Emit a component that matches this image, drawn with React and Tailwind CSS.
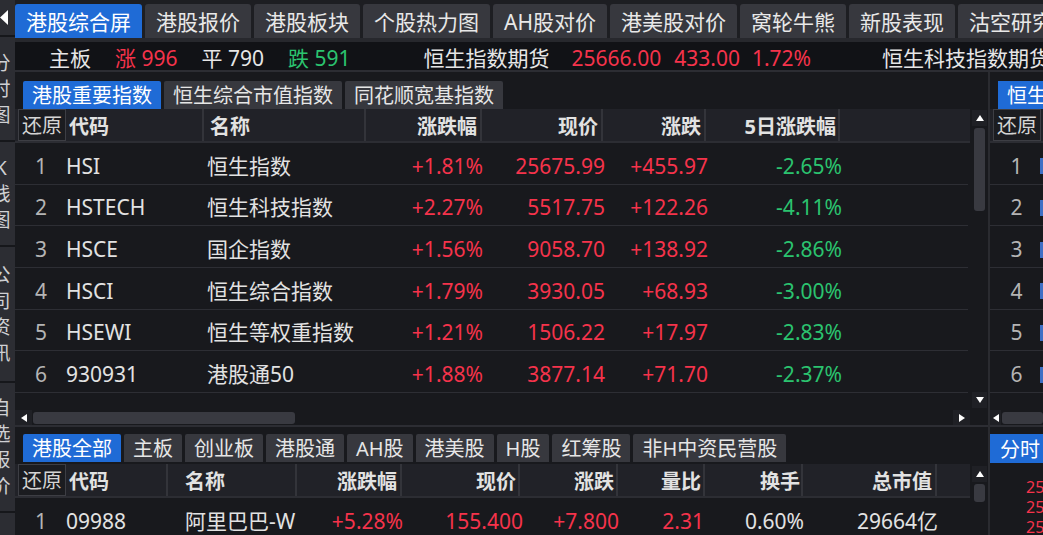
import React from "react";

// ---------------------------------------------------------------------------
// Data
// ---------------------------------------------------------------------------
const topTabs = ["港股综合屏", "港股报价", "港股板块", "个股热力图", "AH股对价", "港美股对价", "窝轮牛熊", "新股表现", "沽空研究"];
const indexTabs = ["港股重要指数", "恒生综合市值指数", "同花顺宽基指数"];
const boardTabs = ["港股全部", "主板", "创业板", "港股通", "AH股", "港美股", "H股", "红筹股", "非H中资民营股"];

const indexRows = [
    ["1", "HSI", "恒生指数", "+1.81%", "25675.99", "+455.97", "-2.65%"],
    ["2", "HSTECH", "恒生科技指数", "+2.27%", "5517.75", "+122.26", "-4.11%"],
    ["3", "HSCE", "国企指数", "+1.56%", "9058.70", "+138.92", "-2.86%"],
    ["4", "HSCI", "恒生综合指数", "+1.79%", "3930.05", "+68.93", "-3.00%"],
    ["5", "HSEWI", "恒生等权重指数", "+1.21%", "1506.22", "+17.97", "-2.83%"],
    ["6", "930931", "港股通50", "+1.88%", "3877.14", "+71.70", "-2.37%"],
];

// ---------------------------------------------------------------------------
// Small drawings
// ---------------------------------------------------------------------------
const Tri = ({ dir }) => {
    const pts = {
        up: "0,6 4,0 8,6",
        down: "0,0 8,0 4,6",
        left: "6,0 6,8 0,4",
        right: "0,0 0,8 6,4",
    }[dir];
    const vb = dir === "up" || dir === "down" ? "0 0 8 6" : "0 0 6 8";
    const cls = dir === "up" || dir === "down" ? "w-[8px] h-[6px]" : "w-[6px] h-[8px]";
    return (
        <svg viewBox={vb} className={cls}>
            <polygon points={pts} fill="#ffffff" />
        </svg>
    );
};

const VText = ({ chars }) => (
    <div className="flex flex-col -ml-[9px] w-[20px]">
        {chars.split("").map((c, i) => (
            <span key={i} className="text-center text-[19px] leading-[26px] text-[#cfd0d3]">{c}</span>
        ))}
    </div>
);

// ---------------------------------------------------------------------------
// Sidebar
// ---------------------------------------------------------------------------
const Sidebar = () => (
    <div className="w-[15px] shrink-0 h-full bg-[#2c2d33] flex flex-col overflow-hidden">
        <div className="h-[35px] shrink-0 flex items-center">
            <svg viewBox="0 0 8 15" className="w-[8px] h-[15px]">
                <polygon points="8,0 8,15 0,7.5" fill="#ffffff" />
            </svg>
        </div>
        <div className="h-[2px] shrink-0 bg-[#16171b]" />
        <div className="h-[103px] shrink-0 flex items-center"><VText chars="分时图" /></div>
        <div className="h-[2px] shrink-0 bg-[#16171b]" />
        <div className="h-[103px] shrink-0 flex items-center"><VText chars="K线图" /></div>
        <div className="h-[2px] shrink-0 bg-[#16171b]" />
        <div className="h-[134px] shrink-0 flex items-center"><VText chars="公司资讯" /></div>
        <div className="h-[2px] shrink-0 bg-[#16171b]" />
        <div className="h-[128px] shrink-0 flex items-center"><VText chars="自选报价" /></div>
        <div className="h-[2px] shrink-0 bg-[#16171b]" />
        <div className="flex-1" />
    </div>
);

// ---------------------------------------------------------------------------
// Tabs
// ---------------------------------------------------------------------------
const SubTabs = ({ items }) => (
    <div className="flex gap-[3px] h-[28px]">
        {items.map((t, i) => (
            <div
                key={t}
                className={`px-[9px] pt-[2px] flex items-center text-[20px] whitespace-nowrap rounded-t-[2px] ${i === 0 ? "bg-[#1f6bd6] text-white" : "bg-[#37383e] text-[#e6e6e6]"}`}
            >
                {t}
            </div>
        ))}
    </div>
);

const RestoreBox = () => (
    <div className="w-[48px] h-[32px] shrink-0 self-end border border-[#3d3e44] bg-[#1b1c20] flex items-center justify-center pt-[2px] text-[20px] font-normal text-[#d4d4d4]">
        还原
    </div>
);

// ---------------------------------------------------------------------------
// Upper table
// ---------------------------------------------------------------------------
const IndexTable = () => (
    <div className="flex h-[316px] shrink-0">
        <div className="w-[955px] flex flex-col">
            <div className="h-[301px] shrink-0 flex flex-col">
                {/* header */}
                <div className="h-[34px] shrink-0 pl-[3px] flex bg-[#212228] border-b-2 border-[#2c2d33] text-[20px] font-bold text-[#e2e2e2]">
                    <RestoreBox />
                    <div className="w-[138px] pl-[3px] pt-[3px] flex items-center border-r-2 border-[#33343a]">代码</div>
                    <div className="w-[162px] pl-[6px] pt-[3px] flex items-center border-r-2 border-[#33343a]">名称</div>
                    <div className="w-[116px] pr-[3px] pt-[3px] flex items-center justify-end border-r-2 border-[#33343a]">涨跌幅</div>
                    <div className="w-[121px] pr-[3px] pt-[3px] flex items-center justify-end border-r-2 border-[#33343a]">现价</div>
                    <div className="w-[103px] pr-[3px] pt-[3px] flex items-center justify-end border-r-2 border-[#33343a]">涨跌</div>
                    <div className="w-[134px] pr-[2px] pt-[3px] flex items-center justify-end border-r-2 border-[#33343a]">5日涨跌幅</div>
                    <div className="flex-1" />
                </div>
                {/* rows */}
                {indexRows.map((r) => (
                    <div key={r[0]} className="h-[41.67px] shrink-0 pl-[3px] pt-[6px] flex items-center border-b border-[#2d2e34] text-[21px] mr-[2px]">
                        <div className="w-[46px] text-center text-[#b4b4b4]">{r[0]}</div>
                        <div className="w-[143px] pl-[2px] text-[#e2e2e2]">{r[1]}</div>
                        <div className="w-[159px] text-[#e2e2e2] whitespace-nowrap">{r[2]}</div>
                        <div className="w-[117px] text-right text-[#f5334b]">{r[3]}</div>
                        <div className="w-[122px] text-right text-[#f5334b]">{r[4]}</div>
                        <div className="w-[103px] text-right text-[#f5334b]">{r[5]}</div>
                        <div className="w-[134px] text-right text-[#2bc36f]">{r[6]}</div>
                    </div>
                ))}
            </div>
            <div className="flex items-center h-[15px] shrink-0">
                <div className="w-[17px] h-[15px] bg-[#1f2025] flex items-center justify-center"><Tri dir="left" /></div>
                <div className="ml-[1px] w-[262px] h-[12px] rounded-[3px] bg-[#393a41]" />
                <div className="flex-1" />
                <div className="w-[17px] h-[16px] bg-[#1f2025] flex items-center justify-center"><Tri dir="right" /></div>
            </div>
        </div>
        {/* vertical scroll */}
        <div className="w-[18px] flex flex-col pl-[2px] pt-[1px]">
            <div className="w-[15px] h-[16px] shrink-0 bg-[#1f2025] flex items-center justify-center"><Tri dir="up" /></div>
            <div className="ml-[2px] mt-[2px] w-[11px] h-[83px] shrink-0 rounded-[3px] bg-[#393a41]" />
            <div className="flex-1" />
            <div className="w-[15px] h-[16px] shrink-0 bg-[#1f2025] flex items-center justify-center"><Tri dir="down" /></div>
            <div className="h-[17px] shrink-0" />
        </div>
    </div>
);

// ---------------------------------------------------------------------------
// Lower table
// ---------------------------------------------------------------------------
const BoardTable = () => (
    <div className="flex flex-1 min-h-0 overflow-hidden">
        <div className="w-[955px] flex flex-col">
            <div className="h-[34px] shrink-0 pl-[3px] flex bg-[#212228] border-b-2 border-[#2c2d33] text-[20px] font-bold text-[#e2e2e2]">
                <RestoreBox />
                <div className="w-[102px] pl-[3px] pt-[3px] flex items-center border-r-2 border-[#33343a]">代码</div>
                <div className="w-[129px] pl-[17px] pt-[3px] flex items-center border-r-2 border-[#33343a]">名称</div>
                <div className="w-[105px] pr-[3px] pt-[3px] flex items-center justify-end border-r-2 border-[#33343a]">涨跌幅</div>
                <div className="w-[118px] pr-[2px] pt-[3px] flex items-center justify-end border-r-2 border-[#33343a]">现价</div>
                <div className="w-[98px] pr-[2px] pt-[3px] flex items-center justify-end border-r-2 border-[#33343a]">涨跌</div>
                <div className="w-[87px] pr-[2px] pt-[3px] flex items-center justify-end border-r-2 border-[#33343a]">量比</div>
                <div className="w-[98px] pr-[1px] pt-[3px] flex items-center justify-end border-r-2 border-[#33343a]">换手</div>
                <div className="w-[134px] pr-[3px] pt-[3px] flex items-center justify-end border-r-2 border-[#33343a]">总市值</div>
                <div className="flex-1" />
            </div>
            <div className="h-[42px] shrink-0 pl-[3px] pt-[5px] flex items-center text-[21px]">
                <div className="w-[46px] text-center text-[#b4b4b4]">1</div>
                <div className="w-[121px] pl-[2px] text-[#e2e2e2]">09988</div>
                <div className="w-[112px] text-[#e2e2e2] whitespace-nowrap">阿里巴巴-W</div>
                <div className="w-[106px] text-right text-[#f5334b]">+5.28%</div>
                <div className="w-[120px] text-right text-[#f5334b]">155.400</div>
                <div className="w-[96px] text-right text-[#f5334b]">+7.800</div>
                <div className="w-[85px] text-right text-[#f5334b]">2.31</div>
                <div className="w-[100px] text-right text-[#e2e2e2]">0.60%</div>
                <div className="w-[134px] text-right text-[#e2e2e2]">29664亿</div>
            </div>
        </div>
        <div className="w-[18px] flex flex-col pl-[2px] pt-[2px]">
            <div className="w-[15px] h-[16px] shrink-0 bg-[#1f2025] flex items-center justify-center"><Tri dir="up" /></div>
            <div className="ml-[2px] mt-[2px] w-[11px] h-[18px] shrink-0 rounded-[3px] bg-[#393a41]" />
        </div>
    </div>
);

// ---------------------------------------------------------------------------
// Right (clipped) panel
// ---------------------------------------------------------------------------
const RightPanel = () => (
    <div className="flex-1 flex flex-col overflow-hidden">
        <div className="h-[353px] shrink-0 flex flex-col">
            <div className="pt-[9px] pl-[8px] h-[37px] shrink-0">
                <div className="h-[28px] w-[80px] px-[9px] pt-[2px] bg-[#1f6bd6] text-white text-[20px] flex items-center whitespace-nowrap">恒生指数</div>
            </div>
            <div className="h-[34px] shrink-0 pl-[3px] flex bg-[#212228] border-b-2 border-[#2c2d33]">
                <RestoreBox />
            </div>
            {["1", "2", "3", "4", "5", "6"].map((n) => (
                <div key={n} className="h-[41.67px] shrink-0 pl-[3px] pt-[6px] flex items-center border-b border-[#2d2e34] text-[21px]">
                    <div className="w-[48px] text-center text-[#b4b4b4]">{n}</div>
                    <div className="w-[3px] h-[16px] bg-[#3f6fc4]" />
                </div>
            ))}
            <div className="flex-1" />
            <div className="h-[15px] shrink-0 flex items-center">
                <div className="w-[17px] h-[15px] bg-[#1f2025] flex items-center justify-center"><Tri dir="left" /></div>
                <div className="ml-[1px] w-[60px] h-[12px] rounded-[3px] bg-[#393a41]" />
            </div>
        </div>
        <div className="h-[2px] shrink-0 bg-[#2c2d33]" />
        <div className="pt-[7px] shrink-0">
            <div className="h-[29px] w-[60px] pl-[10px] pt-[2px] bg-[#1f6bd6] text-white text-[20px] flex items-center">分时</div>
        </div>
        <div className="pl-[36px] pt-[14px] flex flex-col text-[16px] leading-[20px] text-[#f5334b]">
            <span>25</span>
            <span>25</span>
            <span>25</span>
        </div>
    </div>
);

// ---------------------------------------------------------------------------
// App
// ---------------------------------------------------------------------------
export default function App() {
    return (
        <div className="w-[1043px] h-[535px] overflow-hidden flex bg-[#18191d] font-['Noto_Sans','Noto_Sans_CJK_SC',sans-serif]">
            <Sidebar />
            <div className="flex-1 flex flex-col min-w-0">
                {/* Top tabs */}
                <div className="h-[38px] shrink-0 pt-[4px] flex gap-[3px] bg-[#1d1e22] overflow-hidden">
                    {topTabs.map((t, i) => (
                        <div
                            key={t}
                            className={`h-[34px] px-[11px] pt-[3px] shrink-0 flex items-center text-[21px] whitespace-nowrap rounded-t-[3px] ${i === 0 ? "bg-[#1f6bd6] text-white" : "bg-[#37383e] text-[#e8e8e8]"}`}
                        >
                            {t}
                        </div>
                    ))}
                </div>
                <div className="h-[4px] shrink-0 bg-[#27282d]" />

                {/* Market stats */}
                <div className="h-[28px] shrink-0 pt-[5px] flex items-center bg-[#111216] text-[21px] text-[#e6e6e6] whitespace-nowrap overflow-hidden">
                    <span className="ml-[34px]">主板</span>
                    <span className="ml-[24px] text-[#f5334b]">涨 996</span>
                    <span className="ml-[24px]">平 790</span>
                    <span className="ml-[24px] text-[#2bc36f]">跌 591</span>
                    <span className="ml-[73px]">恒生指数期货</span>
                    <span className="ml-[22px] text-[#f5334b]">25666.00</span>
                    <span className="ml-[13px] text-[#f5334b]">433.00</span>
                    <span className="ml-[12px] text-[#f5334b]">1.72%</span>
                    <span className="ml-[71px]">恒生科技指数期货</span>
                </div>
                <div className="h-[2px] shrink-0 bg-[#2c2d33]" />

                {/* Content */}
                <div className="flex flex-1 min-h-0">
                    <div className="w-[973px] shrink-0 flex flex-col">
                        <div className="h-[37px] shrink-0 pt-[9px] pl-[8px]">
                            <SubTabs items={indexTabs} />
                        </div>
                        <IndexTable />
                        <div className="h-[2px] shrink-0 bg-[#2c2d33]" />
                        <div className="h-[37px] shrink-0 pt-[7px] pl-[8px]">
                            <SubTabs items={boardTabs} />
                        </div>
                        <BoardTable />
                    </div>
                    <div className="w-[2px] bg-[#2a2b30] shrink-0" />
                    <RightPanel />
                </div>
            </div>
        </div>
    );
}
